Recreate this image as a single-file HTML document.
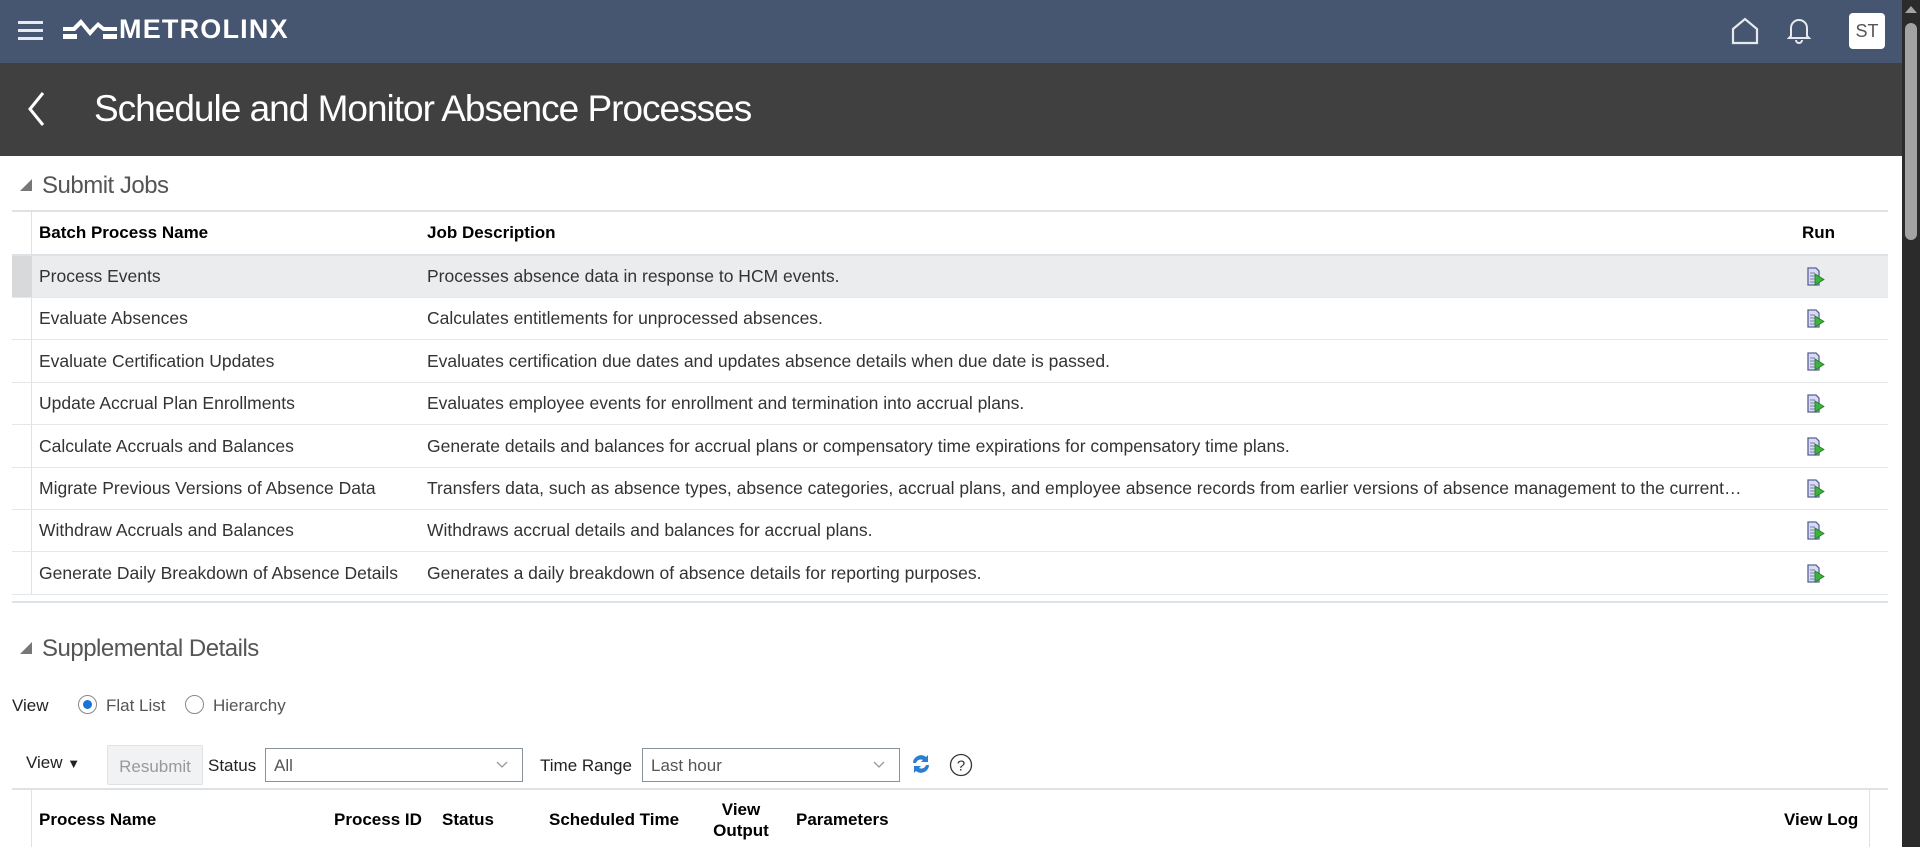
<!DOCTYPE html>
<html><head><meta charset="utf-8"><style>
*{box-sizing:border-box;margin:0;padding:0}
body{width:1920px;height:847px;overflow:hidden;background:#fff;font-family:"Liberation Sans",Arial,sans-serif;color:#222;position:relative}
.abs{position:absolute}
.top{left:0;top:0;width:1902px;height:63px;background:#465671}
.titlebar{left:0;top:63px;width:1902px;height:93px;background:#404040}
.sb{left:1902px;top:0;width:18px;height:847px;background:#2b2b2b}
.thumb{left:1905px;top:23px;width:12px;height:217px;background:#a3a3a3;border-radius:6px}
.sec{font-size:24px;color:#555;letter-spacing:-0.5px}
.tri{width:0;height:0;border-left:12px solid transparent;border-bottom:12px solid #777}
.line{background:#dde2e7;height:2px}
.hdr{font-size:17px;font-weight:bold;color:#000}
.cell{font-size:17.5px;color:#333;white-space:nowrap}
.runic{position:absolute;left:1807px}
</style></head><body>
<div class="abs top"></div>
<div class="abs" style="left:18px;top:21px;width:25px;height:3px;background:#e6e9ee"></div>
<div class="abs" style="left:18px;top:29px;width:25px;height:3px;background:#e6e9ee"></div>
<div class="abs" style="left:18px;top:37px;width:25px;height:3px;background:#e6e9ee"></div>
<svg class="abs" style="left:63px;top:19px" width="54" height="24" viewBox="0 0 54 24"><path d="M0 8 H10 L18 0 L27 11 L35 3 L41 8 H54 V12 H40 L35 8 L27 17 L18 6 L12 12 H0Z M0 15 H14 V20 H0Z M40 15 H54 V20 H40Z" fill="#fff"/></svg>
<div class="abs" style="left:119px;top:14px;font-size:27px;font-weight:bold;color:#fff;letter-spacing:1.2px">METROLINX</div>
<svg class="abs" style="left:1730px;top:16px" width="30" height="30" viewBox="0 0 30 30"><path d="M3 13 L15 3 L27 13 V27 H3Z" fill="none" stroke="#e6e9ee" stroke-width="2.2"/></svg>
<svg class="abs" style="left:1787px;top:17px" width="24" height="27" viewBox="0 0 24 27"><path d="M4 19 V11 A8 8 0 0 1 20 11 V19 L22 21 H2Z M9 23 A3 3 0 0 0 15 23" fill="none" stroke="#e6e9ee" stroke-width="2"/></svg>
<div class="abs" style="left:1849px;top:13px;width:36px;height:36px;background:#fff;border-radius:4px;color:#555;font-size:18px;text-align:center;line-height:36px">ST</div>
<div class="abs titlebar"></div>
<svg class="abs" style="left:24px;top:90px" width="24" height="38" viewBox="0 0 24 38"><path d="M19 3 L6 19 L19 35" fill="none" stroke="#fff" stroke-width="3"/></svg>
<div class="abs" style="left:94px;top:88px;font-size:37px;color:#fff;letter-spacing:-1px">Schedule and Monitor Absence Processes</div>
<div class="abs sb"></div>
<div class="abs" style="left:1905px;top:6px;width:0;height:0;border-left:6px solid transparent;border-right:6px solid transparent;border-bottom:7px solid #a3a3a3"></div>
<div class="abs thumb"></div>

<div class="abs tri" style="left:20px;top:179px"></div>
<div class="abs sec" style="left:42px;top:172px">Submit Jobs</div>
<div class="abs line" style="left:12px;top:210px;width:1876px"></div>
<div class="abs" style="left:31px;top:211px;width:1px;height:383px;background:#dde2e7"></div>
<div class="abs hdr" style="left:39px;top:223px">Batch Process Name</div>
<div class="abs hdr" style="left:427px;top:223px">Job Description</div>
<div class="abs hdr" style="left:1802px;top:223px">Run</div>
<div class="abs" style="left:12px;top:254px;width:1876px;height:2px;background:#dde2e7"></div>
<div class="abs" style="left:12px;top:256px;width:1876px;height:41px;background:#ebecee"></div>
<div class="abs" style="left:12px;top:256px;width:20px;height:41px;background:#d8d9db"></div>
<div id="rows"></div>
<div class="abs line" style="left:12px;top:601px;width:1876px"></div>

<div class="abs tri" style="left:20px;top:642px"></div>
<div class="abs sec" style="left:42px;top:635px">Supplemental Details</div>
<div class="abs" style="left:12px;top:696px;font-size:17px;color:#222">View</div>
<div class="abs" style="left:78px;top:695px;width:19px;height:19px;border:1px solid #888;border-radius:50%;background:#fff"></div>
<div class="abs" style="left:83px;top:700px;width:9px;height:9px;border-radius:50%;background:#1a73d8"></div>
<div class="abs" style="left:106px;top:696px;font-size:17px;color:#555">Flat List</div>
<div class="abs" style="left:185px;top:695px;width:19px;height:19px;border:1px solid #888;border-radius:50%;background:#fff"></div>
<div class="abs" style="left:213px;top:696px;font-size:17px;color:#555">Hierarchy</div>

<div class="abs" style="left:26px;top:753px;font-size:17px;color:#222">View <span style="font-size:13px">&#9660;</span></div>
<div class="abs" style="left:107px;top:745px;width:96px;height:40px;background:#f1f2f3;border:1px solid #e0e2e4;border-radius:2px;color:#999;font-size:17px;text-align:center;line-height:42px">Resubmit</div>
<div class="abs" style="left:208px;top:756px;font-size:17px;color:#222">Status</div>
<div class="abs" style="left:265px;top:748px;width:258px;height:34px;border:1px solid #8a9199;background:#fff"></div>
<div class="abs" style="left:274px;top:756px;font-size:17px;color:#555">All</div>
<div class="abs" style="left:540px;top:756px;font-size:17px;color:#222">Time Range</div>
<div class="abs" style="left:642px;top:748px;width:258px;height:34px;border:1px solid #8a9199;background:#fff"></div>
<div class="abs" style="left:651px;top:756px;font-size:17px;color:#555">Last hour</div>
<svg class="abs" style="left:495px;top:760px" width="14" height="10"><path d="M2 2 L7 7 L12 2" fill="none" stroke="#999" stroke-width="1.3"/></svg>
<svg class="abs" style="left:872px;top:760px" width="14" height="10"><path d="M2 2 L7 7 L12 2" fill="none" stroke="#999" stroke-width="1.3"/></svg>
<svg class="abs" style="left:910px;top:753px" width="22" height="22" viewBox="0 0 22 22"><path d="M3 10 A8 8 0 0 1 16 4 L18 2 V9 H11 L13 7 A5 5 0 0 0 6 10Z" fill="#2a7fd4"/><path d="M19 12 A8 8 0 0 1 6 18 L4 20 V13 H11 L9 15 A5 5 0 0 0 16 12Z" fill="#2a7fd4"/></svg>
<svg class="abs" style="left:949px;top:753px" width="24" height="24" viewBox="0 0 24 24"><circle cx="12" cy="12" r="10.5" fill="none" stroke="#333" stroke-width="1.3"/><text x="12" y="17.5" text-anchor="middle" font-size="15" font-family="Liberation Sans" fill="#333">?</text></svg>

<div class="abs line" style="left:12px;top:788px;width:1876px"></div>
<div class="abs" style="left:31px;top:790px;width:1px;height:57px;background:#dde2e7"></div>
<div class="abs" style="left:1869px;top:790px;width:1px;height:57px;background:#dde2e7"></div>
<div class="abs hdr" style="left:39px;top:810px">Process Name</div>
<div class="abs hdr" style="left:334px;top:810px">Process ID</div>
<div class="abs hdr" style="left:442px;top:810px">Status</div>
<div class="abs hdr" style="left:549px;top:810px">Scheduled Time</div>
<div class="abs hdr" style="left:711px;top:799px;width:60px;text-align:center;line-height:21px">View Output</div>
<div class="abs hdr" style="left:796px;top:810px">Parameters</div>
<div class="abs hdr" style="left:1784px;top:810px">View Log</div>

<script>
var r=[["Process Events","Processes absence data in response to HCM events."],
["Evaluate Absences","Calculates entitlements for unprocessed absences."],
["Evaluate Certification Updates","Evaluates certification due dates and updates absence details when due date is passed."],
["Update Accrual Plan Enrollments","Evaluates employee events for enrollment and termination into accrual plans."],
["Calculate Accruals and Balances","Generate details and balances for accrual plans or compensatory time expirations for compensatory time plans."],
["Migrate Previous Versions of Absence Data","Transfers data, such as absence types, absence categories, accrual plans, and employee absence records from earlier versions of absence management to the current…"],
["Withdraw Accruals and Balances","Withdraws accrual details and balances for accrual plans."],
["Generate Daily Breakdown of Absence Details","Generates a daily breakdown of absence details for reporting purposes."]];
var h="";
for(var i=0;i<8;i++){var t=256+i*42.4;
h+='<div class="abs cell" style="left:39px;top:'+(t+10)+'px">'+r[i][0]+'</div>';
h+='<div class="abs cell" style="left:427px;top:'+(t+10)+'px">'+r[i][1]+'</div>';
h+='<svg class="runic" style="top:'+(t+11)+'px" width="18" height="20" viewBox="0 0 18 20"><path d="M1 1 H9 L12 4 V18 H1Z" fill="#d8dcf0" stroke="#5a5f9a" stroke-width="1.3"/><path d="M3 6 H8 M3 9 H8 M3 12 H8 M3 15 H8" stroke="#7a80b0" stroke-width="1"/><path d="M8 7 L17 12.5 L8 18Z" fill="#3cb33c" stroke="#1f7a1f" stroke-width="0.8"/></svg>';
h+='<div class="abs" style="left:12px;top:'+(t+41)+'px;width:1876px;height:1px;background:#e4e7ea"></div>';}
document.getElementById("rows").innerHTML=h;
</script>
</body></html>
